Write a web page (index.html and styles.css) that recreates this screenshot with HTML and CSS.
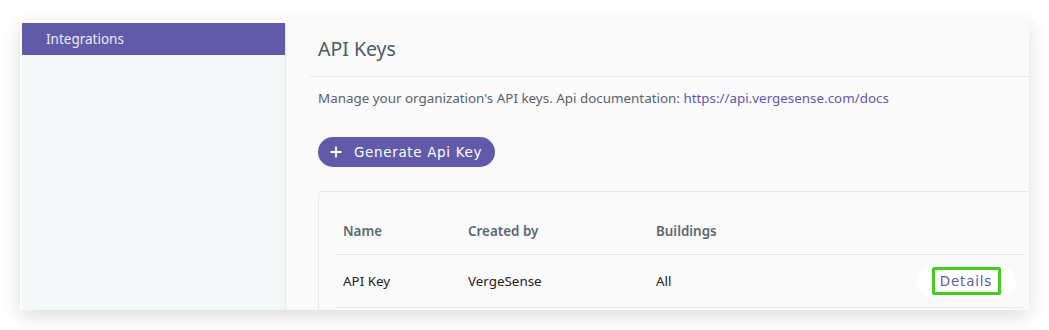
FILE: index.html
```html
<!DOCTYPE html>
<html lang="en">
<head>
    <meta charset="UTF-8">
    <title>API Keys</title>
    <link rel="stylesheet" href="styles.css">
</head>
<body>
    <div class="frame">
        <aside class="sidebar">
            <a class="side-item active" href="#">Integrations</a>
        </aside>

        <main class="main">
            <div class="page-header">
                <h1 class="page-title">API Keys</h1>
            </div>

            <p class="page-desc">
                Manage your organization's API keys. Api documentation:
                <a href="#" class="doc-link">https://api.vergesense.com/docs</a>
            </p>

            <button class="generate-btn">
                <svg class="plus" width="12" height="12" viewBox="0 0 12 12">
                    <path d="M6 0.5v11M0.5 6h11" stroke="#fff" stroke-width="1.8" fill="none"/>
                </svg>
                <span>Generate Api Key</span>
            </button>

            <div class="keys-card">
                <div class="keys-row keys-head">
                    <div class="col col-name">Name</div>
                    <div class="col col-created">Created by</div>
                    <div class="col col-buildings">Buildings</div>
                </div>
                <div class="keys-row">
                    <div class="col col-name">API Key</div>
                    <div class="col col-created">VergeSense</div>
                    <div class="col col-buildings">All</div>
                    <div class="col col-action">
                        <button class="details-btn"><span class="details-label">Details</span></button>
                    </div>
                </div>
            </div>
        </main>
    </div>
</body>
</html>
```

FILE: styles.css
```css
* {
    margin: 0;
    padding: 0;
    box-sizing: border-box;
}

body {
    font-family: "Noto Sans", "Open Sans", sans-serif;
    background: #fff;
    padding: 20px;
    color: #333;
}

.frame {
    width: 1009px;
    height: 290px;
    display: flex;
    background: #fff;
    overflow: hidden;
    box-shadow: 0 6px 18px rgba(0, 0, 0, 0.14);
}

.sidebar {
    width: 264px;
    flex-shrink: 0;
    margin: 3px 0 0 2px;
    background: #f3f7f8;
    border-right: 1px solid #e4e8ea;
}

.side-item {
    display: block;
    height: 32px;
    line-height: 32px;
    padding-left: 24px;
    font-size: 13.5px;
    color: #eceaf6;
    text-decoration: none;
}

.side-item.active {
    background: #615aa8;
}

.main {
    flex: 1;
    background: #fafafa;
    overflow: hidden;
}

.page-header {
    height: 57px;
    margin-left: 24px;
    padding-left: 8px;
    border-bottom: 1px solid #e6e8ea;
    display: flex;
    align-items: center;
}

.page-title {
    font-size: 19.5px;
    font-weight: 400;
    color: #4b5a65;
}

.page-desc {
    margin: 11px 0 0 32px;
    font-size: 13.4px;
    line-height: 20px;
    color: #56636c;
}

.doc-link {
    color: #6159a8;
    text-decoration: none;
}

.generate-btn {
    margin: 29px 0 0 32px;
    height: 30px;
    padding: 0 13px 0 12px;
    border: none;
    border-radius: 15px;
    background: #615aa8;
    color: #fff;
    font-family: "DejaVu Sans", sans-serif;
    font-size: 13.5px;
    letter-spacing: 0.65px;
    display: flex;
    align-items: center;
    gap: 12px;
}

.keys-card {
    margin: 24px 0 0 32px;
    width: 723px;
    padding: 16px 16px 20px;
    border: 1px solid #e8e8e8;
    border-radius: 4px;
}

.keys-row {
    display: flex;
    align-items: center;
    height: 53px;
    border-bottom: 1px solid #e6e8ea;
    font-size: 13.4px;
    color: #222;
}

.keys-head {
    height: 47px;
    font-weight: 600;
    color: #5a6872;
}

.col {
    padding-left: 8px;
}

.col-name {
    width: 125px;
}

.col-created {
    width: 188px;
}

.col-buildings {
    flex: 1;
}

.col-action {
    padding-right: 8px;
}

.details-btn {
    width: 100px;
    height: 31px;
    border: none;
    border-radius: 16px;
    background: #fff;
    display: flex;
    align-items: center;
    justify-content: center;
}

.details-label {
    display: block;
    width: 69px;
    height: 28px;
    line-height: 22px;
    border: 3px solid #44cc22;
    border-radius: 2px;
    font-family: "DejaVu Sans", sans-serif;
    font-size: 13.5px;
    letter-spacing: 0.8px;
    color: #615aa8;
    text-align: center;
}
```
